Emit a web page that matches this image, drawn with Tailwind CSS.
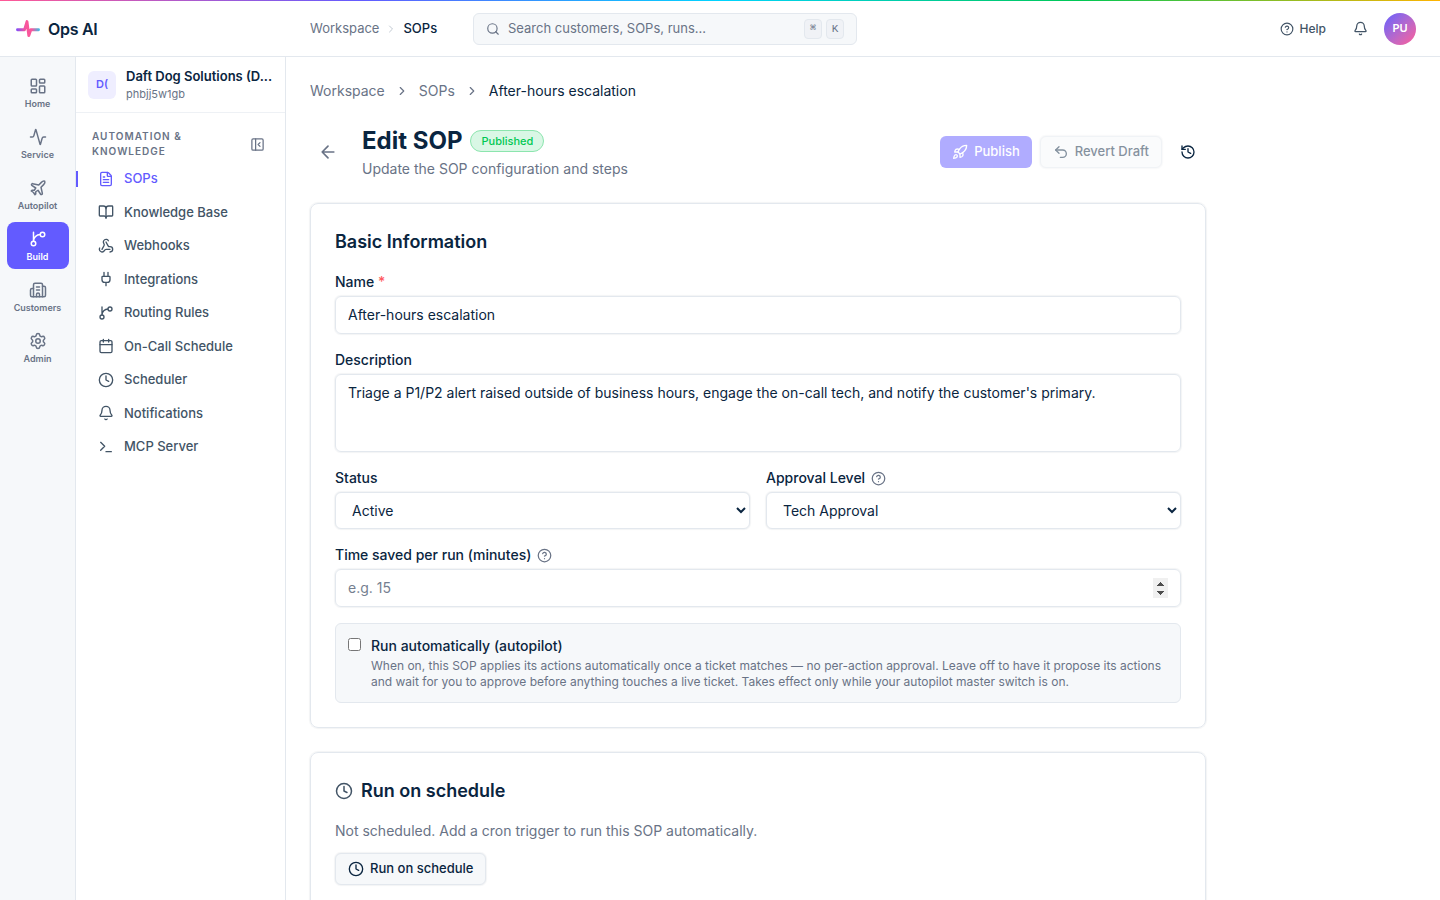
<!DOCTYPE html>
<html lang="en">
  <head>
    <meta charset="UTF-8" />
    <title>Edit SOP - Ops AI</title>
    <meta name="viewport" content="width=device-width, initial-scale=1.0" />
    <script src="https://cdn.jsdelivr.net/npm/@tailwindcss/browser@4"></script>
  </head>

  <body class="h-screen overflow-hidden bg-white font-['Inter',sans-serif] text-sm text-[#0a2540] antialiased">
    <!-- icon sprite -->
    <svg class="hidden">
      <symbol id="dashboard" viewBox="0 0 24 24"><rect width="7" height="9" x="3" y="3" rx="1" /><rect width="7" height="5" x="14" y="3" rx="1" /><rect width="7" height="9" x="14" y="12" rx="1" /><rect width="7" height="5" x="3" y="16" rx="1" /></symbol>
      <symbol id="activity" viewBox="0 0 24 24"><path d="M22 12h-2.48a2 2 0 0 0-1.93 1.46l-2.35 8.36a.25.25 0 0 1-.48 0L9.24 2.18a.25.25 0 0 0-.48 0l-2.35 8.36A2 2 0 0 1 4.49 12H2" /></symbol>
      <symbol id="plane" viewBox="0 0 24 24"><path d="M17.8 19.2 16 11l3.5-3.5C21 6 21.5 4 21 3c-1-.5-3 0-4.5 1.5L13 8 4.8 6.2c-.5-.1-.9.1-1.1.5l-.3.5c-.2.5-.1 1 .3 1.3L9 12l-2 3H4l-1 1 3 2 2 3 1-1v-3l3-2 3.5 5.3c.3.4.8.5 1.3.3l.5-.2c.4-.3.6-.7.5-1.2z" /></symbol>
      <symbol id="branch" viewBox="0 0 24 24"><path d="M15 6a9 9 0 0 0-9 9V3" /><circle cx="18" cy="6" r="3" /><circle cx="6" cy="18" r="3" /></symbol>
      <symbol id="building" viewBox="0 0 24 24"><path d="M10 12h4M10 8h4M14 21v-3a2 2 0 0 0-4 0v3" /><path d="M6 10H4a2 2 0 0 0-2 2v7a2 2 0 0 0 2 2h16a2 2 0 0 0 2-2V9a2 2 0 0 0-2-2h-2" /><path d="M6 21V5a2 2 0 0 1 2-2h8a2 2 0 0 1 2 2v16" /></symbol>
      <symbol id="settings" viewBox="0 0 24 24"><path d="M9.671 4.136a2.34 2.34 0 0 1 4.659 0 2.34 2.34 0 0 0 3.319 1.915 2.34 2.34 0 0 1 2.33 4.033 2.34 2.34 0 0 0 0 3.831 2.34 2.34 0 0 1-2.33 4.033 2.34 2.34 0 0 0-3.319 1.915 2.34 2.34 0 0 1-4.659 0 2.34 2.34 0 0 0-3.32-1.915 2.34 2.34 0 0 1-2.33-4.033 2.34 2.34 0 0 0 0-3.831A2.34 2.34 0 0 1 6.35 6.051a2.34 2.34 0 0 0 3.319-1.915" /><circle cx="12" cy="12" r="3" /></symbol>
      <symbol id="file" viewBox="0 0 24 24"><path d="M6 22a2 2 0 0 1-2-2V4a2 2 0 0 1 2-2h8a2.4 2.4 0 0 1 1.704.706l3.588 3.588A2.4 2.4 0 0 1 20 8v12a2 2 0 0 1-2 2z" /><path d="M14 2v5a1 1 0 0 0 1 1h5M10 9H8M16 13H8M16 17H8" /></symbol>
      <symbol id="book" viewBox="0 0 24 24"><path d="M12 7v14" /><path d="M3 18a1 1 0 0 1-1-1V4a1 1 0 0 1 1-1h5a4 4 0 0 1 4 4 4 4 0 0 1 4-4h5a1 1 0 0 1 1 1v13a1 1 0 0 1-1 1h-6a3 3 0 0 0-3 3 3 3 0 0 0-3-3z" /></symbol>
      <symbol id="webhook" viewBox="0 0 24 24"><path d="M18 16.98h-5.99c-1.1 0-1.95.94-2.48 1.9A4 4 0 0 1 2 17c.01-.7.2-1.4.57-2" /><path d="m6 17 3.13-5.78c.53-.97.1-2.18-.5-3.1a4 4 0 1 1 6.89-4.06" /><path d="m12 6 3.13 5.73C15.66 12.7 16.9 13 18 13a4 4 0 0 1 0 8" /></symbol>
      <symbol id="plug" viewBox="0 0 24 24"><path d="M12 22v-5M15 8V2M17 8a1 1 0 0 1 1 1v4a4 4 0 0 1-4 4h-4a4 4 0 0 1-4-4V9a1 1 0 0 1 1-1zM9 8V2" /></symbol>
      <symbol id="calendar" viewBox="0 0 24 24"><path d="M8 2v4M16 2v4M3 10h18" /><rect width="18" height="18" x="3" y="4" rx="2" /></symbol>
      <symbol id="clock" viewBox="0 0 24 24"><circle cx="12" cy="12" r="10" /><path d="M12 6v6l4 2" /></symbol>
      <symbol id="bell" viewBox="0 0 24 24"><path d="M10.268 21a2 2 0 0 0 3.464 0" /><path d="M3.262 15.326A1 1 0 0 0 4 17h16a1 1 0 0 0 .74-1.673C19.41 13.956 18 12.499 18 8A6 6 0 0 0 6 8c0 4.499-1.411 5.956-2.738 7.326" /></symbol>
      <symbol id="terminal" viewBox="0 0 24 24"><path d="M12 19h8M4 17l6-6-6-6" /></symbol>
      <symbol id="panel" viewBox="0 0 24 24"><rect width="18" height="18" x="3" y="3" rx="2" /><path d="M9 3v18M16 15l-3-3 3-3" /></symbol>
      <symbol id="rocket" viewBox="0 0 24 24"><path d="M4.5 16.5c-1.5 1.26-2 5-2 5s3.74-.5 5-2c.71-.84.7-2.13-.09-2.91a2.18 2.18 0 0 0-2.91-.09z" /><path d="m12 15-3-3a22 22 0 0 1 2-3.95A12.88 12.88 0 0 1 22 2c0 2.72-.78 7.5-6 11a22.35 22.35 0 0 1-4 2z" /><path d="M9 12H4s.55-3.03 2-4c1.62-1.08 5 0 5 0M12 15v5s3.03-.55 4-2c1.08-1.62 0-5 0-5" /></symbol>
      <symbol id="undo" viewBox="0 0 24 24"><path d="M9 14 4 9l5-5" /><path d="M4 9h10.5a5.5 5.5 0 0 1 5.5 5.5 5.5 5.5 0 0 1-5.5 5.5H11" /></symbol>
      <symbol id="history" viewBox="0 0 24 24"><path d="M3 12a9 9 0 1 0 9-9 9.75 9.75 0 0 0-6.74 2.74L3 8" /><path d="M3 3v5h5M12 7v5l4 2" /></symbol>
      <symbol id="help" viewBox="0 0 24 24"><circle cx="12" cy="12" r="10" /><path d="M9.09 9a3 3 0 0 1 5.83 1c0 2-3 3-3 3M12 17h.01" /></symbol>
      <symbol id="search" viewBox="0 0 24 24"><path d="m21 21-4.34-4.34" /><circle cx="11" cy="11" r="8" /></symbol>
      <symbol id="chevron" viewBox="0 0 24 24"><path d="m9 18 6-6-6-6" /></symbol>
      <symbol id="arrow-left" viewBox="0 0 24 24"><path d="m12 19-7-7 7-7M19 12H5" /></symbol>
    </svg>

    <div class="flex h-full flex-col fill-none [stroke-linecap:round] [stroke-linejoin:round]">
      <div class="h-px w-full shrink-0 bg-[linear-gradient(90deg,#ff5996,#635bff,#00d4ff,#00c853,#ffb300)]"></div>

      <!-- top bar -->
      <header class="flex h-14 shrink-0 items-center border-b border-[#e3e8ee] pr-6 pl-4">
        <div class="flex w-[294px] items-center gap-2">
          <svg class="size-6" viewBox="0 0 24 24">
            <defs>
              <linearGradient id="pulse" gradientUnits="userSpaceOnUse" x1="0" y1="0" x2="24" y2="0">
                <stop offset="0" stop-color="#7a4dff" />
                <stop offset=".4" stop-color="#f9569b" />
                <stop offset=".65" stop-color="#f9569b" />
                <stop offset="1" stop-color="#2fc4ea" />
              </linearGradient>
            </defs>
            <path stroke="url(#pulse)" stroke-width="2.9" d="M1.5 12.7H8.6L11 4.6 12.8 18.6 14.8 12.7h7.7" />
          </svg>
          <span class="text-base font-semibold tracking-[-0.3px]">Ops AI</span>
        </div>
        <nav class="flex w-[163px] items-center gap-1.5 text-[13px] text-[#697386]">
          <span>Workspace</span>
          <svg class="size-3 stroke-[#c1c9d2] stroke-2"><use href="#chevron" /></svg>
          <span class="font-medium text-[#0a2540]">SOPs</span>
        </nav>
        <div class="flex h-8 w-96 items-center rounded-md border border-[#e3e8ee] bg-[#f6f8fa] px-3 text-[13px] text-[#697386]">
          <svg class="mr-2 size-3.5 stroke-current stroke-2"><use href="#search" /></svg>
          <span class="flex-1">Search customers, SOPs, runs...</span>
          <kbd class="mr-1 flex h-5 w-[18px] items-center justify-center rounded border border-[#e3e8ee] bg-[#f0f2f6] pt-0.5 font-['Liberation_Mono',monospace] text-[10px] font-medium">⌘</kbd>
          <kbd class="flex h-5 w-[18px] items-center justify-center rounded border border-[#e3e8ee] bg-[#f0f2f6] pt-0.5 font-['Liberation_Mono',monospace] text-[11px] font-medium">K</kbd>
        </div>
        <div class="ml-auto flex items-center text-[#425466]">
          <svg class="mr-1.5 size-3.5 stroke-current stroke-2"><use href="#help" /></svg>
          <span class="mr-[27px] text-xs font-medium">Help</span>
          <svg class="mr-4 size-[15px] stroke-current stroke-2"><use href="#bell" /></svg>
          <div class="flex size-8 items-center justify-center rounded-full bg-linear-135 from-[#635bff] to-[#ff5996] text-[11px] font-semibold text-white">PU</div>
        </div>
      </header>

      <div class="flex min-h-0 flex-1">
        <!-- rail -->
        <aside class="flex w-[76px] shrink-0 flex-col items-center gap-1 border-r border-[#e3e8ee] bg-[#f6f8fa] pt-3 text-[9px] leading-3 font-semibold text-[#697386]">
          <div class="flex h-[47px] w-[62px] flex-col items-center gap-[3px] pt-2">
            <svg class="size-[18px] stroke-current stroke-2"><use href="#dashboard" /></svg>
            <span>Home</span>
          </div>
          <div class="flex h-[47px] w-[62px] flex-col items-center gap-[3px] pt-2">
            <svg class="size-[18px] stroke-current stroke-2"><use href="#activity" /></svg>
            <span>Service</span>
          </div>
          <div class="flex h-[47px] w-[62px] flex-col items-center gap-[3px] pt-2">
            <svg class="size-[18px] stroke-current stroke-2"><use href="#plane" /></svg>
            <span>Autopilot</span>
          </div>
          <div class="flex h-[47px] w-[62px] flex-col items-center gap-[3px] rounded-lg bg-[#635bff] pt-2 text-white">
            <svg class="size-[18px] stroke-current stroke-2"><use href="#branch" /></svg>
            <span>Build</span>
          </div>
          <div class="flex h-[47px] w-[62px] flex-col items-center gap-[3px] pt-2">
            <svg class="size-[18px] stroke-current stroke-2"><use href="#building" /></svg>
            <span>Customers</span>
          </div>
          <div class="flex h-[47px] w-[62px] flex-col items-center gap-[3px] pt-2">
            <svg class="size-[18px] stroke-current stroke-2"><use href="#settings" /></svg>
            <span>Admin</span>
          </div>
        </aside>

        <!-- section sidebar -->
        <aside class="w-[210px] shrink-0 border-r border-[#e3e8ee]">
          <div class="flex h-14 items-center gap-2.5 border-b border-[#eef1f5] px-3">
            <div class="flex size-7 shrink-0 items-center justify-center rounded-md bg-[#efeeff] text-[11px] font-semibold text-[#635bff]">D(</div>
            <div class="min-w-0 pb-0.5">
              <p class="text-[13px] leading-5 font-semibold whitespace-nowrap">Daft Dog Solutions (D...</p>
              <p class="text-[11px] leading-4 text-[#697386]">phbjj5w1gb</p>
            </div>
          </div>
          <div class="flex items-center justify-between pt-4 pr-5 pl-4 text-[#697386]">
            <p class="w-32 text-[10px] leading-[15px] font-semibold tracking-[1px]">AUTOMATION &amp; KNOWLEDGE</p>
            <svg class="size-[15px] stroke-current stroke-2"><use href="#panel" /></svg>
          </div>
          <nav class="mt-[3px] text-[13px] font-medium text-[#425466]">
            <a class="relative flex h-[33.5px] items-center gap-2.5 pl-[22px] text-[#635bff]">
              <span class="absolute left-0 h-4 w-0.5 bg-[#635bff]"></span>
              <svg class="size-4 stroke-current stroke-2"><use href="#file" /></svg>SOPs
            </a>
            <a class="flex h-[33.5px] items-center gap-2.5 pl-[22px]"><svg class="size-4 stroke-current stroke-2"><use href="#book" /></svg>Knowledge Base</a>
            <a class="flex h-[33.5px] items-center gap-2.5 pl-[22px]"><svg class="size-4 stroke-current stroke-2"><use href="#webhook" /></svg>Webhooks</a>
            <a class="flex h-[33.5px] items-center gap-2.5 pl-[22px]"><svg class="size-4 stroke-current stroke-2"><use href="#plug" /></svg>Integrations</a>
            <a class="flex h-[33.5px] items-center gap-2.5 pl-[22px]"><svg class="size-4 stroke-current stroke-2"><use href="#branch" /></svg>Routing Rules</a>
            <a class="flex h-[33.5px] items-center gap-2.5 pl-[22px]"><svg class="size-4 stroke-current stroke-2"><use href="#calendar" /></svg>On-Call Schedule</a>
            <a class="flex h-[33.5px] items-center gap-2.5 pl-[22px]"><svg class="size-4 stroke-current stroke-2"><use href="#clock" /></svg>Scheduler</a>
            <a class="flex h-[33.5px] items-center gap-2.5 pl-[22px]"><svg class="size-4 stroke-current stroke-2"><use href="#bell" /></svg>Notifications</a>
            <a class="flex h-[33.5px] items-center gap-2.5 pl-[22px]"><svg class="size-4 stroke-current stroke-2"><use href="#terminal" /></svg>MCP Server</a>
          </nav>
        </aside>

        <main class="min-w-0 flex-1 overflow-hidden p-6">
          <div class="flex w-4xl flex-col gap-6">
            <nav class="flex items-center text-[#697386]">
              <span>Workspace</span>
              <svg class="mx-2.5 size-3.5 stroke-current stroke-2"><use href="#chevron" /></svg>
              <span>SOPs</span>
              <svg class="mx-2.5 size-3.5 stroke-current stroke-2"><use href="#chevron" /></svg>
              <span class="text-[#0a2540]">After-hours escalation</span>
            </nav>

            <div class="flex items-center">
              <button class="mr-4 flex size-9 items-center justify-center text-[#697386]">
                <svg class="size-5 stroke-current stroke-2"><use href="#arrow-left" /></svg>
              </button>
              <div class="flex-1">
                <div class="flex items-center gap-2">
                  <h1 class="text-2xl font-bold">Edit SOP</h1>
                  <span class="rounded-full border border-[#8ce5ae] bg-[#d9f7e5] px-2.5 text-[11px] leading-5 font-medium text-[#00c853]">Published</span>
                </div>
                <p class="mt-0.5 text-[#697386]">Update the SOP configuration and steps</p>
              </div>
              <div class="flex items-center gap-2 text-[13px] font-medium">
                <button class="flex h-8 items-center gap-1.5 rounded-md bg-[#635bff] px-3 pb-px text-white opacity-50">
                  <svg class="size-4 stroke-current stroke-2"><use href="#rocket" /></svg>Publish
                </button>
                <button class="flex h-8 items-center gap-1.5 rounded-md border border-[#e3e8ee] bg-[#f6f8fa] px-3 pb-px opacity-50 shadow-[0_0_1px_1px_rgba(10,37,64,0.05)]">
                  <svg class="size-4 stroke-current stroke-2"><use href="#undo" /></svg>Revert Draft
                </button>
                <button class="flex size-9 items-center justify-center">
                  <svg class="size-4 stroke-current stroke-2"><use href="#history" /></svg>
                </button>
              </div>
            </div>

            <section class="flex flex-col gap-4 rounded-lg border border-[#e3e8ee] p-6 shadow-[0_0_1px_1px_rgba(10,37,64,0.05)]">
              <h2 class="text-lg leading-7 font-semibold">Basic Information</h2>
              <div class="flex flex-col gap-1">
                <label for="name" class="font-medium">Name <span class="text-[#ff5a5f]">*</span></label>
                <input type="text" id="name" name="name" value="After-hours escalation" class="h-[38px] rounded-md border border-[#e3e8ee] px-3 pb-0.5 shadow-[0_0_1px_1px_rgba(10,37,64,0.05)]" />
              </div>
              <div class="flex flex-col gap-1">
                <label for="description" class="font-medium">Description</label>
                <textarea id="description" name="description" class="h-[78px] resize-none rounded-md border border-[#e3e8ee] px-3 py-2 shadow-[0_0_1px_1px_rgba(10,37,64,0.05)]">Triage a P1/P2 alert raised outside of business hours, engage the on-call tech, and notify the customer's primary.</textarea>
              </div>
              <div class="grid grid-cols-2 gap-4">
                <div class="flex flex-col gap-1">
                  <label for="status" class="font-medium">Status</label>
                  <select id="status" class="h-[37px] rounded-md border border-[#e3e8ee] bg-white px-3 shadow-[0_0_1px_1px_rgba(10,37,64,0.05)]">
                    <option>Active</option>
                  </select>
                </div>
                <div class="flex flex-col gap-1">
                  <label for="approval" class="flex items-center gap-1.5 font-medium">
                    Approval Level
                    <svg class="size-[15px] stroke-[#697386] stroke-2"><use href="#help" /></svg>
                  </label>
                  <select id="approval" class="h-[37px] rounded-md border border-[#e3e8ee] bg-white px-3 shadow-[0_0_1px_1px_rgba(10,37,64,0.05)]">
                    <option>Tech Approval</option>
                  </select>
                </div>
              </div>
              <div class="flex flex-col gap-1">
                <label for="minutes" class="flex items-center gap-1.5 font-medium">
                  Time saved per run (minutes)
                  <svg class="size-[15px] stroke-[#697386] stroke-2"><use href="#help" /></svg>
                </label>
                <div class="flex h-[38px] items-center rounded-md border border-[#e3e8ee] px-3 shadow-[0_0_1px_1px_rgba(10,37,64,0.05)]">
                  <input type="text" inputmode="numeric" id="minutes" placeholder="e.g. 15" class="h-5 flex-1 outline-none placeholder:text-[#757f90]" />
                  <svg class="h-5 w-[15px] bg-[#f0f0f0] fill-[#4d4d4d]" viewBox="0 0 15 20" shape-rendering="crispEdges">
                    <path d="M4 8h7L7.5 4z" />
                    <path d="M4 13h7l-3.500 4z" />
                  </svg>
                </div>
              </div>
              <div class="flex items-start gap-2.5 rounded-md border border-[#e3e8ee] bg-[#f6f8fa] p-3">
                <input type="checkbox" id="autopilot" class="mt-0.5 size-[13px] shrink-0" />
                <div>
                  <label for="autopilot" class="block font-medium">Run automatically (autopilot)</label>
                  <p class="mt-0.5 text-xs text-[#697386]">When on, this SOP applies its actions automatically once a ticket matches — no per-action approval. Leave off to have it propose its actions and wait for you to approve before anything touches a live ticket. Takes effect only while your autopilot master switch is on.</p>
                </div>
              </div>
            </section>

            <section class="h-60 rounded-lg border border-[#e3e8ee] p-6 shadow-[0_0_1px_1px_rgba(10,37,64,0.05)]">
              <h2 class="flex items-center gap-2 text-lg leading-7 font-semibold">
                <svg class="size-[18px] stroke-[#425466] stroke-2"><use href="#clock" /></svg>Run on schedule
              </h2>
              <p class="mt-4 text-[#697386]">Not scheduled. Add a cron trigger to run this SOP automatically.</p>
              <button class="mt-3 flex h-8 items-center gap-1.5 rounded-md border border-[#e3e8ee] bg-[#f6f8fa] px-3 pb-px text-[13px] font-medium shadow-[0_0_1px_1px_rgba(10,37,64,0.05)]">
                <svg class="size-4 stroke-current stroke-2"><use href="#clock" /></svg>Run on schedule
              </button>
            </section>
          </div>
        </main>
      </div>
    </div>
  </body>
</html>
